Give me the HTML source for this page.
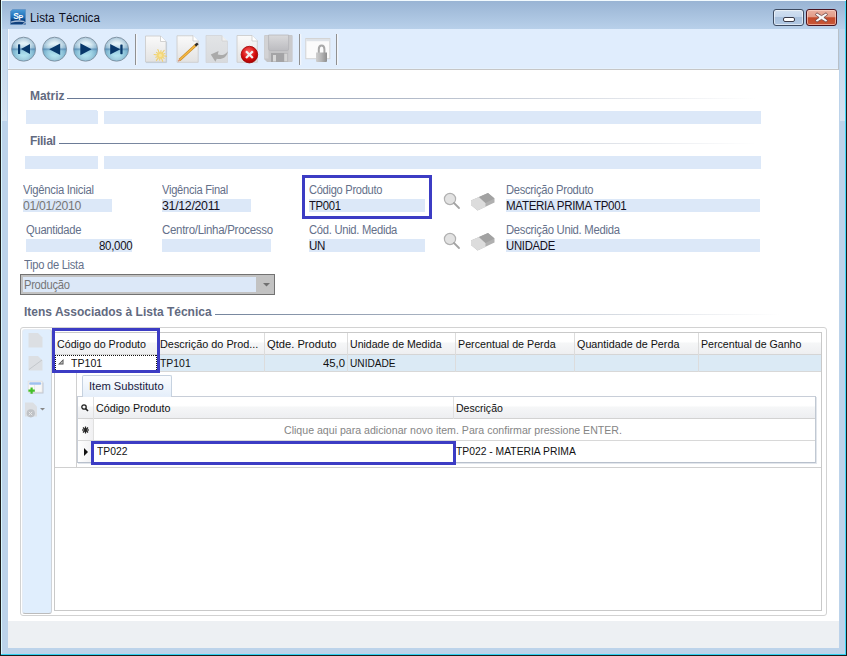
<!DOCTYPE html>
<html><head><meta charset="utf-8">
<style>
*{box-sizing:border-box;margin:0;padding:0}
html,body{width:847px;height:656px;overflow:hidden;background:#bcd3ea;font-family:"Liberation Sans",sans-serif;}
.a{position:absolute}
#win{position:absolute;left:0;top:0;width:847px;height:656px;background:#bcd3ea;border:1px solid #1c1c1c;}
#title{position:absolute;left:0;top:0;width:847px;height:29px;background:linear-gradient(#98b3d3,#b8d0ea);}
.t{position:absolute;white-space:pre;font-size:12px;letter-spacing:-0.3px;line-height:13px;transform-origin:0 0}
.dis{color:#767676}
.sec{font-weight:bold;color:#626a80;letter-spacing:-0.05px}
.lbl{color:#64708a}
.fld{position:absolute;background:#dce8f8;height:13px}
.val{color:#141020}
.g{position:absolute;white-space:pre;font-size:11px;line-height:13px;color:#111;transform-origin:0 0}
</style></head><body>
<div id="win"></div>
<div id="title"></div>
<!-- frame edges -->
<div class="a" style="left:0;top:0;width:1px;height:656px;background:#1c1c1c"></div>
<div class="a" style="left:1px;top:0;width:1px;height:655px;background:#d8f8ff"></div>
<div class="a" style="left:846px;top:0;width:1px;height:656px;background:#1c1c1c"></div>
<div class="a" style="left:845px;top:0;width:1px;height:655px;background:#40d8f8"></div>
<div class="a" style="left:0;top:655px;width:847px;height:1px;background:#1c1c1c"></div>
<div class="a" style="left:1px;top:654px;width:845px;height:1px;background:#30d0f0"></div>
<div class="a" style="left:1px;top:0;width:845px;height:1px;background:#f2fafe"></div>

<div class="a" style="left:2px;top:29px;width:5px;height:92px;background:linear-gradient(#c2d6ec,#d4e2f0)"></div>
<div class="a" style="left:840px;top:29px;width:5px;height:92px;background:linear-gradient(#c2d6ec,#d4e2f0)"></div>
<!-- title -->
<svg class="a" style="left:10px;top:9px" width="16" height="16">
<defs><linearGradient id="spg" x1="0" y1="0" x2="0" y2="1"><stop offset="0" stop-color="#4a9ad8"/><stop offset="0.55" stop-color="#1a6ab4"/><stop offset="0.7" stop-color="#0a3f80"/><stop offset="1" stop-color="#123f7a"/></linearGradient></defs>
<path d="M2.5 0.5 H15.5 V15.5 H0.5 V2.5 Z" fill="url(#spg)" stroke="#5a8cc0" stroke-width="0.6"/>
<path d="M1 12.5 Q8 10.5 14.5 12 L14.5 13.2 Q8 12 1 13.8 Z" fill="#d8e6f4" opacity="0.75"/>
<path d="M13 15.5 L15.5 13" stroke="#e0e8f0" stroke-width="1"/>
<text x="3.2" y="10.2" font-family="Liberation Sans" font-weight="bold" font-size="8.5" fill="#fff">S</text>
<text x="8.6" y="10.6" font-family="Liberation Sans" font-weight="bold" font-size="7" fill="#fff">P</text>
</svg>
<div class="t" style="left:30px;top:11px;font-size:12px;letter-spacing:0.05px;color:#0e0e1c;line-height:14px;word-spacing:1px;transform:scaleX(0.97)">Lista Técnica</div>

<!-- min / close -->
<div class="a" style="left:773px;top:9px;width:31px;height:17px;border:1px solid #3e4c62;border-radius:3px;background:linear-gradient(#d2e0f0 0%,#c4d6ec 45%,#a8c0dc 50%,#b2c9e4 100%);box-shadow:inset 0 0 0 1px rgba(255,255,255,0.55)"></div>
<div class="a" style="left:783px;top:17px;width:12px;height:5px;background:#fff;border:1px solid #3a3a48;border-radius:2px"></div>
<div class="a" style="left:806px;top:9px;width:31px;height:17px;border:1px solid #4a1420;border-radius:3px;background:linear-gradient(#eab0a0 0%,#e29c88 45%,#c44a2a 52%,#c8583a 100%);box-shadow:inset 0 0 0 1px rgba(255,220,210,0.6)"></div>
<svg class="a" style="left:815px;top:12px" width="13" height="11"><path d="M1.8 0.8 L6.5 3.6 L11.2 0.8 L12.6 2.8 L8.9 5.5 L12.6 8.2 L11.2 10.2 L6.5 7.4 L1.8 10.2 L0.4 8.2 L4.1 5.5 L0.4 2.8 Z" fill="#fafafa" stroke="#6a4040" stroke-width="0.8" stroke-linejoin="round"/></svg>

<!-- client -->
<div class="a" style="left:8px;top:29px;width:831px;height:619px;background:#fff"></div>
<!-- toolbar -->
<div class="a" style="left:8px;top:29px;width:831px;height:41px;background:#e0edfd;border-bottom:1px solid #c6c6c6;border-right:1px solid #b8c0c8;box-shadow:inset 1px 0 0 #f4f8fd,inset 0 -1px 0 #e5f1fd"></div>

<!-- toolbar icons -->
<svg class="a" style="left:8px;top:29px" width="340" height="40" viewBox="8 29 340 40">
<defs>
<linearGradient id="gb" x1="0" y1="0" x2="0" y2="1">
<stop offset="0" stop-color="#f6fbfc"/><stop offset="0.3" stop-color="#e0f0f6"/><stop offset="0.43" stop-color="#b8d6e6"/><stop offset="0.5" stop-color="#6e9ec2"/><stop offset="0.57" stop-color="#96cce0"/><stop offset="0.78" stop-color="#b4e4f0"/><stop offset="1" stop-color="#d8f8fc"/>
</linearGradient>
<radialGradient id="gbr" cx="0.5" cy="0.5" r="0.5">
<stop offset="0.55" stop-color="#2a6a9a" stop-opacity="0"/><stop offset="1" stop-color="#2a6a9a" stop-opacity="0.35"/>
</radialGradient>
<linearGradient id="gd" x1="0" y1="0" x2="0" y2="1">
<stop offset="0" stop-color="#fafafa"/><stop offset="1" stop-color="#e2e2e2"/>
</linearGradient>
<linearGradient id="gdis" x1="0" y1="0" x2="0" y2="1">
<stop offset="0" stop-color="#e2e4e6"/><stop offset="1" stop-color="#d8dadd"/>
</linearGradient>
<linearGradient id="gfl" x1="0" y1="0" x2="0" y2="1">
<stop offset="0" stop-color="#d8d8d8"/><stop offset="1" stop-color="#a8a8a8"/>
</linearGradient>
<linearGradient id="gfl2" x1="0" y1="0" x2="0" y2="1"><stop offset="0" stop-color="#dadadc"/><stop offset="1" stop-color="#bcbcc0"/></linearGradient>
<linearGradient id="glk" x1="0" y1="0" x2="1" y2="0"><stop offset="0" stop-color="#cfcfcf"/><stop offset="0.5" stop-color="#b4b4b4"/><stop offset="1" stop-color="#8e8e8e"/></linearGradient>
<radialGradient id="gred" cx="0.45" cy="0.35" r="0.7">
<stop offset="0" stop-color="#ff6a6a"/><stop offset="0.6" stop-color="#d40d0d"/><stop offset="1" stop-color="#a00000"/>
</radialGradient>
</defs>
<g stroke="#8a98a6" stroke-width="1">
<circle cx="23.6" cy="49.2" r="12" fill="url(#gb)"/>
<circle cx="54.6" cy="49.2" r="12" fill="url(#gb)"/>
<circle cx="85.6" cy="49.2" r="12" fill="url(#gb)"/>
<circle cx="116.6" cy="49.2" r="12" fill="url(#gb)"/>
</g>
<g fill="url(#gbr)">
<circle cx="23.6" cy="49.2" r="11.7"/><circle cx="54.6" cy="49.2" r="11.7"/><circle cx="85.6" cy="49.2" r="11.7"/><circle cx="116.6" cy="49.2" r="11.7"/>
</g>
<g fill="#08386a">
<rect x="18" y="44.2" width="2.2" height="9.8" rx="0.6"/>
<path d="M21 49 L30 44 L30 54 Z"/>
<path d="M49.2 49.2 L60.2 43.4 L60.2 55 Z"/>
<path d="M91.5 49.2 L80.3 43.2 L80.3 55.2 Z"/>
<rect x="120.3" y="44.4" width="2.3" height="9.8" rx="0.6"/>
<path d="M120.3 49.2 L110.2 44 L110.2 54.4 Z"/>
</g>
<!-- separators -->
<rect x="135" y="34" width="1.2" height="31" fill="#909090"/><rect x="136.2" y="34" width="1" height="31" fill="#fafcff"/>
<rect x="299" y="34" width="1.2" height="31" fill="#909090"/><rect x="300.2" y="34" width="1" height="31" fill="#fafcff"/>
<rect x="336" y="34" width="1.2" height="31" fill="#909090"/><rect x="337.2" y="34" width="1" height="31" fill="#fafcff"/>
<!-- new doc -->
<path d="M145.5 36 H160.5 L166 41.5 V62 H145.5 Z" fill="url(#gd)" stroke="#cdcdcd" stroke-width="0.9"/>
<path d="M166.6 42 V62.6 H146" fill="none" stroke="#b4bcc8" stroke-width="0.8" opacity="0.7"/>
<path d="M160.5 36 V41.5 H166" fill="#fff" stroke="#c8c8c8" stroke-width="0.8"/>
<g stroke="#f2cf62" stroke-width="1.1" stroke-linecap="round" opacity="0.9"><line x1="160.3" y1="55.4" x2="166.5" y2="56.3"/><line x1="160.3" y1="55.4" x2="164.1" y2="58.4"/><line x1="160.3" y1="55.4" x2="162.7" y2="61.2"/><line x1="160.3" y1="55.4" x2="159.6" y2="60.2"/><line x1="160.3" y1="55.4" x2="156.4" y2="60.4"/><line x1="160.3" y1="55.4" x2="155.8" y2="57.2"/><line x1="160.3" y1="55.4" x2="154.1" y2="54.5"/><line x1="160.3" y1="55.4" x2="156.5" y2="52.4"/><line x1="160.3" y1="55.4" x2="157.9" y2="49.6"/><line x1="160.3" y1="55.4" x2="161.0" y2="50.6"/><line x1="160.3" y1="55.4" x2="164.2" y2="50.4"/><line x1="160.3" y1="55.4" x2="164.8" y2="53.6"/></g>
<circle cx="160.3" cy="55.4" r="3.3" fill="#f4d878"/>
<circle cx="160.3" cy="55.4" r="1.6" fill="#f8e4a0"/>
<!-- edit doc -->
<path d="M177 35.8 H193 L198.2 41 V62.3 H177 Z" fill="url(#gd)" stroke="#cdcdcd" stroke-width="0.9"/>
<path d="M193 35.5 V41 H198.5" fill="#fff" stroke="#c8c8c8" stroke-width="0.8"/>
<path d="M179.5 60 L196.5 44.5" stroke="#c88a20" stroke-width="2.7" stroke-linecap="butt"/>
<path d="M179.5 60 L196.5 44.5" stroke="#f6b844" stroke-width="1.5" />
<path d="M195.3 45.6 L197.8 43.3" stroke="#2a2a2a" stroke-width="2.4"/>
<path d="M178.2 61.3 L180.2 59.5" stroke="#d89070" stroke-width="1.5"/>
<!-- undo doc (disabled) -->
<path d="M206 35.5 H221.5 L227.5 41.5 V62.5 H206 Z" fill="url(#gdis)" stroke="#d4d6da" stroke-width="0.9"/>
<path d="M222 35.5 V41 H227.5" fill="#f0f0f0" stroke="#d0d0d0" stroke-width="0.8"/>
<path d="M210.8 54.5 L218.6 51 L217.8 54.6 C221.5 55.8 225.5 54.8 227.8 51.2 C227.2 57.6 221.5 59.8 216.8 58.8 L215.4 61.8 Z" fill="#aaaaaa"/>
<!-- delete doc -->
<path d="M237 35.5 H252 L257.3 40.8 V62.3 H237 Z" fill="url(#gd)" stroke="#cdcdcd" stroke-width="0.9"/>
<path d="M252 35.5 V41 H257.5" fill="#fff" stroke="#c8c8c8" stroke-width="0.8"/>
<circle cx="249.4" cy="54.6" r="8.3" fill="url(#gred)" stroke="#9a0000" stroke-width="0.8"/>
<g stroke="#f2f2f2" stroke-width="2.3"><line x1="246" y1="51.2" x2="252.8" y2="58"/><line x1="252.8" y1="51.2" x2="246" y2="58"/></g>
<!-- save floppy disabled -->
<path d="M265.5 35 H291.5 Q292.5 35 292.5 36 V61 Q292.5 62 291.5 62 H267 L264.2 59.2 V36 Q264.2 35 265.5 35 Z" fill="#c4c4c6"/>
<rect x="264.5" y="35.5" width="4" height="23" fill="#d2d2d4"/>
<rect x="288.6" y="35.5" width="3.6" height="26" fill="#cacacc"/>
<path d="M268.6 35 H288.6 V49 Q288.6 50.5 287 50.5 H270.2 Q268.6 50.5 268.6 49 Z" fill="url(#gfl2)" stroke="#b2b2b6" stroke-width="0.7"/>
<rect x="271" y="53" width="16.4" height="9" fill="#a4a4a6"/>
<rect x="273" y="55" width="3" height="6.5" fill="#d8d8d8"/>
<rect x="284.2" y="53.5" width="3" height="8" fill="#d4d4d4"/>
<!-- lock window -->
<rect x="305.8" y="38.5" width="24" height="20.2" fill="#fbfbfb" stroke="#d4d4d4" stroke-width="1"/>
<rect x="306.3" y="39" width="23" height="2.2" fill="#dfe3e8"/>
<path d="M318.8 53 V49.3 Q318.8 45.6 321.6 45.6 Q324.4 45.6 324.4 49.3 V53" fill="none" stroke="#a8a8a8" stroke-width="2"/>
<path d="M316 52.4 H327 V61 Q327 62 326 62 H317 Q316 62 316 61 Z" fill="url(#glk)"/>
</svg>
<!-- status -->
<div class="a" style="left:8px;top:621px;width:831px;height:27px;background:#edf0f3"></div>

<!-- Matriz / Filial -->
<div class="t sec" style="left:30px;top:90px">Matriz</div>
<div class="a" style="left:67px;top:98px;width:690px;height:1px;background:linear-gradient(90deg,#687894,#ffffff)"></div>
<div class="fld" style="left:26px;top:110px;width:71px;height:14px"></div><div class="fld" style="left:97px;top:111px;width:1px"></div>
<div class="fld" style="left:104px;top:111px;width:657px"></div>
<div class="t sec" style="left:30px;top:135px;letter-spacing:-0.3px">Filial</div>
<div class="a" style="left:59px;top:143px;width:698px;height:1px;background:linear-gradient(90deg,#687894,#ffffff)"></div>
<div class="fld" style="left:25px;top:156px;width:73px"></div>
<div class="fld" style="left:104px;top:156px;width:657px"></div>

<!-- row 1 -->
<div class="fld" style="left:23px;top:199px;width:89px"></div>
<div class="fld" style="left:162px;top:199px;width:89px"></div>
<div class="fld" style="left:309px;top:199px;width:116px"></div>
<div class="fld" style="left:506px;top:199px;width:254px"></div>
<div class="a" style="left:302px;top:175px;width:130px;height:44px;border:3px solid #3c3cc4"></div>

<!-- row 2 -->
<div class="fld" style="left:26px;top:239px;width:106px"></div>
<div class="fld" style="left:162px;top:239px;width:109px"></div>
<div class="fld" style="left:309px;top:239px;width:116px"></div>
<div class="fld" style="left:506px;top:239px;width:254px"></div>

<!-- search / eraser icons -->
<svg class="a" style="left:436px;top:186px" width="64" height="70">
<defs><linearGradient id="er" x1="0" y1="0" x2="1" y2="0"><stop offset="0" stop-color="#dedede"/><stop offset="0.4" stop-color="#d4d4d4"/><stop offset="0.41" stop-color="#a8a8a8"/><stop offset="1" stop-color="#b8b8b8"/></linearGradient></defs>
<g id="icn">
<circle cx="14" cy="13" r="5.6" fill="#e2e2e2" stroke="#b0b0b0" stroke-width="1.2"/>
<path d="M18 17 L23 22" stroke="#a4a4a4" stroke-width="1.8" stroke-linecap="round"/>
<path d="M35 14.5 L52 7 L58.5 12.5 L58.5 16.5 L41.5 24.5 L35 19 Z" fill="#b0b0b0"/>
<path d="M35 14.5 L43 11 L49.5 17 L49.5 21 L41.5 24.5 L35 19 Z" fill="#dcdcdc"/>
<path d="M43 11 L52 7 L58.5 12.5 L49.5 17 Z" fill="#a2a2a2"/>
</g>
<use href="#icn" y="40"/>
</svg>

<!-- tipo de lista -->
<div class="a" style="left:20px;top:274px;width:255px;height:21px;border:1px solid #727272;background:#c2c2c2"></div>
<div class="a" style="left:23px;top:277px;width:233px;height:15px;background:#dce8f8"></div>
<svg class="a" style="left:263px;top:283px" width="7" height="4"><path d="M0 0 H7 L3.5 3.5 Z" fill="#707070"/></svg>

<!-- Itens associados -->
<div class="t sec" style="left:24px;top:306px;font-size:12px;letter-spacing:0">Itens Associados à Lista Técnica</div>
<div class="a" style="left:215px;top:314px;width:565px;height:1px;background:linear-gradient(90deg,#74849c,#ffffff)"></div>
<div class="t lbl" style="left:23px;top:184px;transform:scaleX(0.942)">Vigência Inicial</div>
<div class="t dis" style="left:23px;top:200px;transform:scaleX(1.017)">01/01/2010</div>
<div class="t lbl" style="left:162px;top:184px;transform:scaleX(0.929)">Vigência Final</div>
<div class="t val" style="left:162px;top:200px;transform:scaleX(1.031)">31/12/2011</div>
<div class="t lbl" style="left:308.5px;top:184px;transform:scaleX(0.924)">Código Produto</div>
<div class="t val" style="left:309px;top:200px;transform:scaleX(0.941)">TP001</div>
<div class="t lbl" style="left:506px;top:184px;transform:scaleX(0.932)">Descrição Produto</div>
<div class="t val" style="left:506px;top:200px;transform:scaleX(0.962)">MATERIA PRIMA TP001</div>
<div class="t lbl" style="left:25.7px;top:224px;transform:scaleX(0.934)">Quantidade</div>
<div class="t val" style="left:99.3px;top:240px;transform:scaleX(0.956)">80,000</div>
<div class="t lbl" style="left:162px;top:224px;transform:scaleX(0.957)">Centro/Linha/Processo</div>
<div class="t lbl" style="left:308.5px;top:224px;transform:scaleX(0.934)">Cód. Unid. Medida</div>
<div class="t val" style="left:309px;top:240px;transform:scaleX(0.967)">UN</div>
<div class="t lbl" style="left:506px;top:224px;transform:scaleX(0.941)">Descrição Unid. Medida</div>
<div class="t val" style="left:506px;top:240px;transform:scaleX(0.943)">UNIDADE</div>
<div class="t lbl" style="left:24px;top:259px;transform:scaleX(0.930)">Tipo de Lista</div>
<div class="t dis" style="left:24.3px;top:279px;transform:scaleX(0.932)">Produção</div>
<!-- grid -->
<div class="a" style="left:20px;top:327px;width:807px;height:289px;border:1px solid #d2d2d2;border-radius:3px;background:#fff"></div>
<div class="a" style="left:22px;top:329px;width:30px;height:285px;background:#e0eefd;border:1px solid #e6ecf4;border-right-color:#cfd3d8;border-bottom-color:#bcbcbc;border-radius:3px"></div>
<div class="a" style="left:54px;top:332px;width:768px;height:279px;border:1px solid #c9c9c9;background:#fff"></div>
<!-- header -->
<div class="a" style="left:55px;top:333px;width:766px;height:22px;background:linear-gradient(#fff 0%,#fff 40%,#f5f6f7 50%,#eeeff1 100%);border-bottom:1px solid #d5d5d5"></div>
<div class="a" style="left:55px;top:355px;width:766px;height:17px;background:#dbeaf5;border-bottom:1px solid #d8d8d8"></div>
<div class="a" style="left:55px;top:355px;width:103px;height:17px;background:#fff"></div>
<!-- col separators -->
<div class="a" style="left:158px;top:333px;width:1px;height:39px;background:#dcdcdc"></div>
<div class="a" style="left:264px;top:333px;width:1px;height:39px;background:#dcdcdc"></div>
<div class="a" style="left:347px;top:333px;width:1px;height:39px;background:#dcdcdc"></div>
<div class="a" style="left:455px;top:333px;width:1px;height:39px;background:#dcdcdc"></div>
<div class="a" style="left:574px;top:333px;width:1px;height:39px;background:#dcdcdc"></div>
<div class="a" style="left:698px;top:333px;width:1px;height:39px;background:#dcdcdc"></div>
<!-- row 1 -->
<div class="a" style="left:55px;top:355px;width:102px;height:1px;background:repeating-linear-gradient(90deg,#111 0 1px,transparent 1px 2px)"></div>
<div class="a" style="left:55px;top:370px;width:102px;height:1px;background:repeating-linear-gradient(90deg,#111 0 1px,transparent 1px 2px)"></div>
<div class="a" style="left:55px;top:355px;width:1px;height:16px;background:repeating-linear-gradient(180deg,#111 0 1px,transparent 1px 2px)"></div>
<div class="a" style="left:156px;top:355px;width:1px;height:16px;background:repeating-linear-gradient(180deg,#111 0 1px,transparent 1px 2px)"></div>
<svg class="a" style="left:57px;top:358px" width="8" height="8"><path d="M1 6.5 L6.5 6.5 L6.5 1 Z" fill="#505050"/><path d="M3 5.6 L5.6 5.6 L5.6 3 Z" fill="#c8c8c8"/></svg>
<!-- blue box -->
<div class="a" style="left:52px;top:328px;width:108px;height:45px;border:3px solid #3c3cc4"></div>

<!-- detail -->
<div class="a" style="left:76px;top:373px;width:1px;height:94px;background:#d0d0d0"></div>
<div class="a" style="left:55px;top:467px;width:766px;height:1px;background:#d0d0d0"></div>
<!-- tab -->
<div class="a" style="left:82px;top:375px;width:90px;height:22px;border:1px solid #c6d2e0;border-bottom:none;border-radius:2px 2px 0 0;background:linear-gradient(#fbfdff,#e4eefa)"></div>
<!-- subgrid -->
<div class="a" style="left:77px;top:396px;width:739px;height:67px;border:1px solid #c8ced8;border-bottom-color:#b8c0cc;border-right-color:#c0c8d2;background:#fff;box-shadow:1px 1px 0 #e2e6ec"></div>
<div class="a" style="left:83px;top:396px;width:88px;height:1px;background:#e6eef9"></div>
<div class="a" style="left:78px;top:397px;width:737px;height:22px;background:linear-gradient(#fff 0%,#fff 40%,#f5f6f7 50%,#edeef1 100%);border-bottom:1px solid #d2d2d2"></div>
<div class="a" style="left:78px;top:419px;width:15px;height:43px;background:linear-gradient(90deg,#fff,#f0f0f2)"></div>
<div class="a" style="left:78px;top:440px;width:737px;height:1px;background:#d8d8d8"></div>
<div class="a" style="left:93px;top:397px;width:1px;height:43px;background:#e0e0e0"></div>
<div class="a" style="left:453px;top:397px;width:1px;height:22px;background:#e0e0e0"></div>
<svg class="a" style="left:81px;top:404px" width="8" height="8"><circle cx="3" cy="3" r="2.2" fill="none" stroke="#222" stroke-width="1.3"/><path d="M4.5 4.5 L7 7" stroke="#222" stroke-width="1.6"/></svg>
<svg class="a" style="left:81px;top:426px" width="9" height="8"><g stroke="#222" stroke-width="1.2"><line x1="4.5" y1="0.5" x2="4.5" y2="7.5"/><line x1="1" y1="4" x2="8" y2="4"/><line x1="2" y1="1.5" x2="7" y2="6.5"/><line x1="7" y1="1.5" x2="2" y2="6.5"/></g></svg>
<svg class="a" style="left:83px;top:447px" width="6" height="10"><path d="M1 1 L5 5 L1 9 Z" fill="#111"/></svg>
<div class="a" style="left:91px;top:441px;width:365px;height:24px;border:3px solid #3c3cc4"></div>

<!-- side icons -->
<svg class="a" style="left:22px;top:329px" width="30" height="95">
<path d="M6.5 4 H16 L20.5 8.5 V18.5 H6.5 Z" fill="#dcdfe3"/>
<path d="M6.5 27 H16 L20.5 31.5 V41.5 H6.5 Z" fill="#dcdfe3"/>
<path d="M7 40.5 L20 31" stroke="#c4c8cc" stroke-width="1"/>
<rect x="7.5" y="53.5" width="14" height="11" fill="#b8bcc6" opacity="0.8"/>
<rect x="6.2" y="52.2" width="14" height="11" fill="#f8f8f8" stroke="#dedede" stroke-width="0.8"/>
<rect x="7.2" y="53.3" width="12" height="2.4" rx="1" fill="#9ec0ee"/>
<line x1="12.5" y1="56" x2="12.5" y2="63" stroke="#e4e4e4" stroke-width="0.8"/>
<path d="M9.6 58.4 V64.8 M6.4 61.6 H12.8" stroke="#44c028" stroke-width="2.2"/>
<path d="M3 73.5 H11 L15 77.5 V87.5 H3 Z" fill="#dcdfe3"/>
<circle cx="8.8" cy="84.3" r="4.1" fill="#bfc2c6"/>
<path d="M6.8 82.8 L10.2 86.2 M10.2 82.8 L6.8 86.2" stroke="#e8e8e8" stroke-width="1"/>
<path d="M18 79 L23 79 L20.5 81.5 Z" fill="#888"/>
</svg>
<div class="g" style="left:56.9px;top:338px;transform:scaleX(0.970)">Código do Produto</div>
<div class="g" style="left:160.0px;top:338px;transform:scaleX(0.987)">Descrição do Prod...</div>
<div class="g" style="left:266.9px;top:338px;transform:scaleX(1.015)">Qtde. Produto</div>
<div class="g" style="left:350.0px;top:338px;transform:scaleX(0.960)">Unidade de Medida</div>
<div class="g" style="left:458.0px;top:338px;transform:scaleX(0.973)">Percentual de Perda</div>
<div class="g" style="left:576.9px;top:338px;transform:scaleX(0.979)">Quantidade de Perda</div>
<div class="g" style="left:701.3px;top:338px;transform:scaleX(0.966)">Percentual de Ganho</div>
<div class="g" style="left:71.1px;top:357px;transform:scaleX(0.961)">TP101</div>
<div class="g" style="left:160.0px;top:357px;transform:scaleX(0.948)">TP101</div>
<div class="g" style="left:322.5px;top:357px;transform:scaleX(1.028)">45,0</div>
<div class="g" style="left:350.0px;top:357px;transform:scaleX(0.921)">UNIDADE</div>
<div class="g" style="left:89.0px;top:380px;transform:scaleX(1.017);color:#1a1a40">Item Substituto</div>
<div class="g" style="left:95.9px;top:402px;transform:scaleX(0.974)">Código Produto</div>
<div class="g" style="left:455.8px;top:402px;transform:scaleX(0.958)">Descrição</div>
<div class="g" style="left:283.6px;top:424px;transform:scaleX(0.963);color:#858585">Clique aqui para adicionar novo item. Para confirmar pressione ENTER.</div>
<div class="g" style="left:96.7px;top:445px;transform:scaleX(0.939)">TP022</div>
<div class="g" style="left:456.4px;top:445px;transform:scaleX(0.939)">TP022 - MATERIA PRIMA</div>
</body></html>
